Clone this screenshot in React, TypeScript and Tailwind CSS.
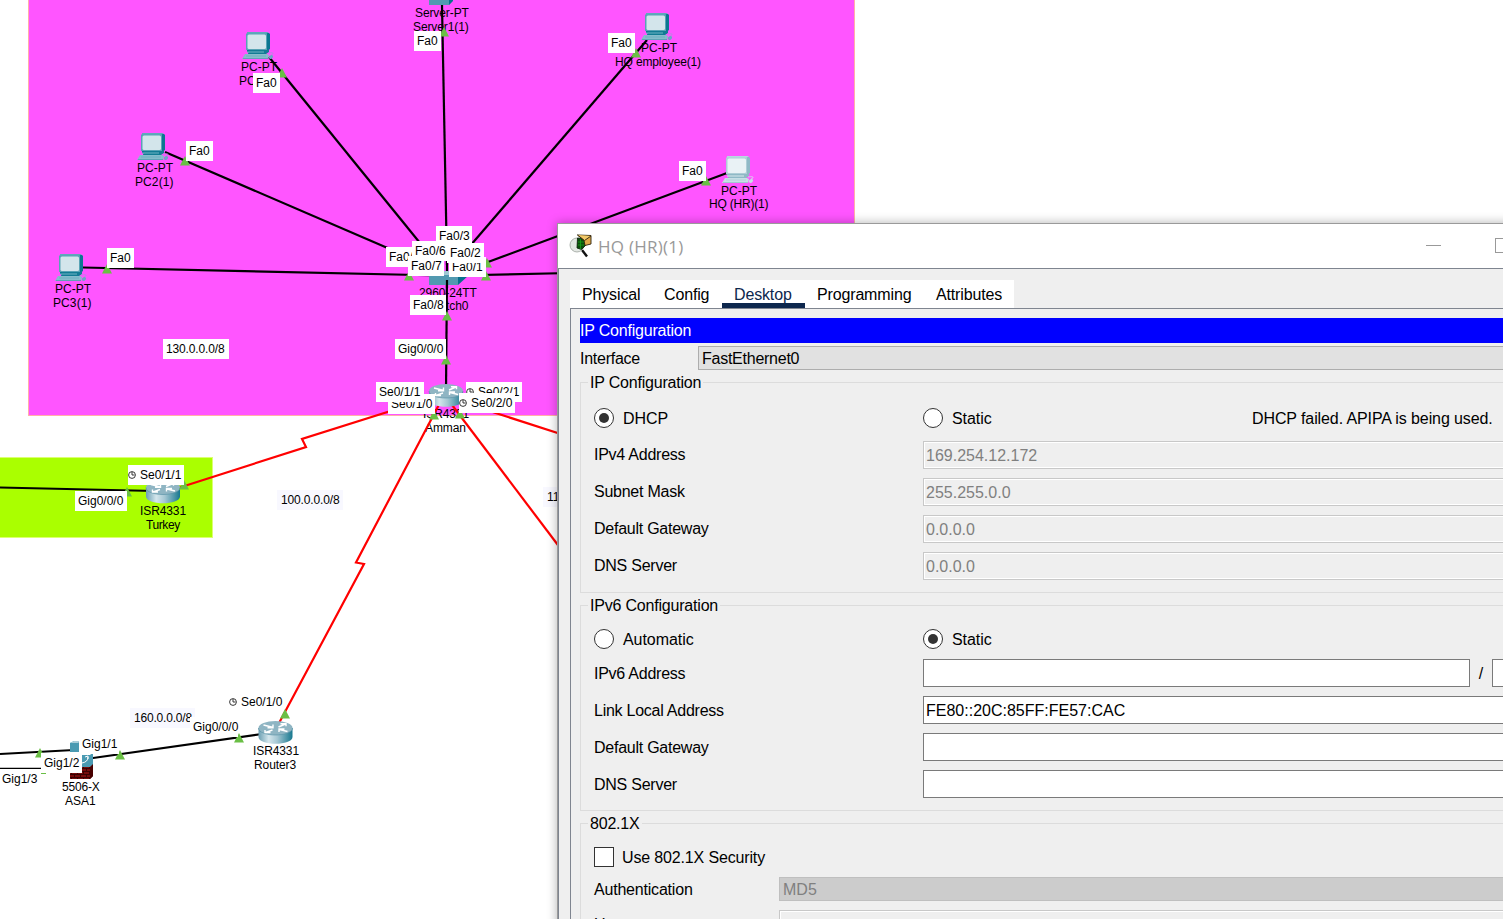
import React from "react";

type Pt = [number, number];

const cables: { pts: Pt[]; red?: boolean; width?: number }[] = [
  { pts: [[269, 57], [420, 243]] },
  { pts: [[442, 5], [447, 265]] },
  { pts: [[647, 40], [470, 246]] },
  { pts: [[727, 173], [480, 265]] },
  { pts: [[165, 152], [420, 262]] },
  { pts: [[83, 267.5], [440, 275.5]] },
  { pts: [[455, 275.5], [570, 273]] },
  { pts: [[447, 275], [446, 390]] },
  { pts: [[0, 487.5], [155, 491]] },
  { pts: [[0, 754], [74, 750]] },
  { pts: [[0, 768.5], [44, 768.5]], width: 1.4 },
  { pts: [[86, 759], [262, 734]] },
  { pts: [[435, 397], [302, 439], [306, 447], [175, 489]], red: true },
  { pts: [[443, 397], [356, 562.5], [364, 564], [278, 725]], red: true },
  { pts: [[446, 397], [570, 561]], red: true },
  { pts: [[446, 397], [570, 437]], red: true },
];

const links: Pt[] = [
  [282, 73], [444, 32], [636, 53], [706, 181], [185, 161], [107, 269],
  [409, 276], [486, 276], [487, 263], [447, 316], [446, 360], [434, 415], [460, 414],
  [127, 492], [184, 485], [285, 714], [239, 738], [120, 755], [40, 753],
];

const names: { x: number; y: number; t: string; s?: number }[] = [
  { x: 241, y: 67, t: "PC-PT" },
  { x: 239, y: 81, t: "PC1(1)" },
  { x: 415, y: 13, t: "Server-PT", s: -0.1 },
  { x: 413, y: 27, t: "Server1(1)", s: -0.1 },
  { x: 641, y: 48, t: "PC-PT" },
  { x: 615, y: 62, t: "HQ employee(1)", s: -0.15 },
  { x: 721, y: 191, t: "PC-PT" },
  { x: 709, y: 204, t: "HQ (HR)(1)", s: -0.2 },
  { x: 137, y: 168, t: "PC-PT" },
  { x: 135, y: 182, t: "PC2(1)", s: 0.1 },
  { x: 55, y: 289, t: "PC-PT" },
  { x: 53, y: 303, t: "PC3(1)", s: 0.1 },
  { x: 419, y: 293, t: "2960-24TT", s: -0.1 },
  { x: 427, y: 306, t: "Switch0", s: -0.1 },
  { x: 423, y: 414, t: "ISR4331", s: -0.1 },
  { x: 425, y: 428, t: "Amman", s: -0.1 },
  { x: 140, y: 511, t: "ISR4331", s: -0.1 },
  { x: 146, y: 525, t: "Turkey", s: -0.4 },
  { x: 253, y: 751, t: "ISR4331", s: -0.1 },
  { x: 254, y: 765, t: "Router3", s: -0.1 },
  { x: 62, y: 787, t: "5506-X", s: -0.2 },
  { x: 65, y: 801, t: "ASA1" },
];

const tags: { x: number; y: number; w: number; t: string; clock?: boolean; tint?: boolean; s?: number }[] = [
  { x: 253, y: 73, w: 27, t: "Fa0" },
  { x: 414, y: 31, w: 27, t: "Fa0" },
  { x: 608, y: 33, w: 27, t: "Fa0" },
  { x: 679, y: 161, w: 27, t: "Fa0" },
  { x: 186, y: 141, w: 27, t: "Fa0" },
  { x: 107, y: 248, w: 27, t: "Fa0" },
  { x: 436, y: 226, w: 36, t: "Fa0/3" },
  { x: 449, y: 257, w: 37, t: "Fa0/1" },
  { x: 386, y: 247, w: 36, t: "Fa0/5" },
  { x: 412, y: 241, w: 36, t: "Fa0/6" },
  { x: 447, y: 243, w: 37, t: "Fa0/2" },
  { x: 408, y: 256, w: 36, t: "Fa0/7" },
  { x: 410, y: 295, w: 36, t: "Fa0/8" },
  { x: 395, y: 339, w: 51, t: "Gig0/0/0" },
  { x: 388, y: 394, w: 47, t: "Se0/1/0" },
  { x: 376, y: 382, w: 48, t: "Se0/1/1" },
  { x: 466, y: 382, w: 56, t: "Se0/2/1", clock: true },
  { x: 459, y: 393, w: 56, t: "Se0/2/0", clock: true },
  { x: 128, y: 465, w: 56, t: "Se0/1/1", clock: true },
  { x: 75, y: 491, w: 52, t: "Gig0/0/0" },
  { x: 163, y: 339, w: 66, t: "130.0.0.0/8", s: -0.15 },
  { x: 277, y: 490, w: 66, t: "100.0.0.0/8", tint: true, s: -0.15 },
  { x: 543, y: 487, w: 66, t: "110.0.0.0/8", tint: true, s: -0.1 },
  { x: 130, y: 708, w: 65, t: "160.0.0.0/8", tint: true, s: -0.2 },
  { x: 190, y: 717, w: 48, t: "Gig0/0/0" },
  { x: 229, y: 692, w: 54, t: "Se0/1/0", clock: true },
  { x: 79, y: 734, w: 40, t: "Gig1/1" },
  { x: 41, y: 753, w: 41, t: "Gig1/2" },
  { x: -1, y: 769, w: 42, t: "Gig1/3" },
];

function Pc({ x, y, pale }: { x: number; y: number; pale?: boolean }) {
  return (
    <g transform={`translate(${x} ${y})`}>
      <path d="M5 1h22l1 1v15l-4 3H5z" fill={pale ? "#8fb9c6" : "#0b7691"} />
      <path d="M5 0h22l-3 2H5z" fill={pale ? "#b9d8e0" : "#5fa9bb"} />
      <rect x="4" y="1.500" width="21" height="16.500" fill={pale ? "#aecdd6" : "#58a3b5"} />
      <rect x="5.500" y="2.500" width="18.500" height="14.500" rx="1.500" fill={pale ? "#e9f2f5" : "#d3e5eb"} />
      <path d="M7 18h18l2-1v3l-3 2H6z" fill={pale ? "#8fb9c6" : "#127b94"} />
      <path d="M5 19.500h17v1H5z" fill={pale ? "#d6e8ed" : "#6fb4c4"} />
      <path d="M3 22h22l2 1-1 4H0z" fill={pale ? "#c7dfe6" : "#86bccb"} />
      <path d="M4 24h20" stroke={pale ? "#b5d2da" : "#6fb0c1"} />
      <path d="M1 26.500h25" stroke={pale ? "#a3c8d2" : "#5fa3b6"} />
      <path d="M26 21q6-1 5 1l-2 1" fill="none" stroke={pale ? "#d6e8ed" : "#b08be0"} strokeWidth=".7" />
      <ellipse cx="29" cy="25" rx="2.300" ry="1.700" fill={pale ? "#c7dfe6" : "#6ea5c5"} transform="rotate(-35 29 25)" />
    </g>
  );
}

function Router({ x, y }: { x: number; y: number }) {
  return (
    <g transform={`translate(${x} ${y})`}>
      <path d="M0 7v9c0 9 34 9 34 0V7z" fill="url(#routerBody)" />
      <ellipse cx="17" cy="7" rx="17" ry="7" fill="#8fb5c3" />
      <path d="M0 7c0 9.300 34 9.300 34 0" fill="none" stroke="#5b93a7" strokeWidth=".7" />
      <g stroke="#fff" strokeWidth="1.400" fill="none">
        <path d="M5 4l9 2.300M14.500 3.400v3.300H9M29 10.500l-8-2M20.500 11V8h5.500" />
        <path d="M20 6l7-3M22 2.800h5.500v2.500M14 9l-7 2.300M12 11.500H6.500V9" />
      </g>
    </g>
  );
}

function Topology() {
  return (
    <>
      <svg className="absolute inset-0" width="1503" height="919">
        <defs>
          <linearGradient id="routerBody">
            <stop offset="0" stopColor="#6b9fb2" />
            <stop offset=".3" stopColor="#d4e6ec" />
            <stop offset=".55" stopColor="#a5c7d3" />
            <stop offset="1" stopColor="#17788f" />
          </linearGradient>
          <pattern id="brick" width="6" height="6" patternUnits="userSpaceOnUse">
            <rect width="6" height="6" fill="#760b0b" />
            <path d="M0 .5h6M0 3.500h6M2.500 0v3M5.500 3v3" stroke="#330000" strokeWidth=".9" />
          </pattern>
        </defs>
        {cables.map((c, i) => (
          <polyline
            key={i}
            points={c.pts.map((p) => p.join(",")).join(" ")}
            fill="none"
            stroke={c.red ? "#ff0000" : "#000"}
            strokeWidth={c.width ?? 2.2}
          />
        ))}
        <Pc x={242} y={32} />
        <Pc x={641} y={13} />
        <Pc x={722} y={156} pale />
        <Pc x={137} y={133} />
        <Pc x={55} y={254} />
        <path d="M429 0h24l-4 5h-20z" fill="#5299b0" />
        <path d="M453 0v1l-4 4V0z" fill="#08708d" />
        <path d="M429 271h40l-12 5h-28z" fill="#9fc7d3" />
        <rect x="429" y="275" width="29" height="10" fill="#5299b0" />
        <path d="M458 275l10-4v5l-10 9z" fill="#08708d" />
        <path d="M447 262v9M447 280v8" stroke="#000" strokeWidth="2.200" />
        <Router x={429} y={384} />
        <Router x={146} y={480.5} />
        <Router x={258.5} y={721} />
        <path d="M70 743l4-2h7v11H70z" fill="#4a9ab2" />
        <path d="M70 743l4-2h7l-3 2z" fill="#a9cdd9" />
        <path d="M82 755h8l3-3v13l-3 2h-8z" fill="#4a9ab2" />
        <path d="M82 763q6-1 6-6M85 757l3-1v3" fill="none" stroke="#fff" />
        <path d="M70 773h12v-6h8l3-2v11l-3 3H70z" fill="url(#brick)" />
        <path d="M90 767l3-3v12l-3 3z" fill="#480000" />
        {links.map(([x, y], i) => (
          <path key={i} d={`M${x - 5} ${y + 4.5}L${x} ${y - 5}L${x + 5} ${y + 4.5}z`} fill="#6abf45" />
        ))}
        <path d="M41 773.500h5" stroke="#6abf45" />
      </svg>
      {tags.map((g, i) => (
        <div
          key={i}
          className={`absolute flex h-[20px] items-center whitespace-nowrap ${g.clock ? "pl-0" : g.tint ? "pl-[4px]" : "pl-[3px]"} ${g.tint ? "bg-[#f8f8ff]" : "bg-white"}`}
          style={{ left: g.x, top: g.y, width: g.w, letterSpacing: g.s ?? 0 }}
        >
          {g.clock && (
            <svg className="mr-[4px] shrink-0" width="8" height="8" viewBox="0 0 8 8" fill="none" stroke="#222" strokeWidth=".9">
              <circle cx="4" cy="4" r="3.400" />
              <path d="M4 1v3h2.500" />
            </svg>
          )}
          <span>{g.t}</span>
        </div>
      ))}
    </>
  );
}

function Radio({ on, label }: { on?: boolean; label: string }) {
  return (
    <label className="flex items-center gap-[9px]">
      <span className="flex size-5 items-center justify-center rounded-full border border-[#333] bg-white">
        {on && <span className="size-2.5 rounded-full bg-[#333]" />}
      </span>
      <span className="pt-[2px] tracking-[-0.05px]">{label}</span>
    </label>
  );
}

function Choice({ first, second, firstOn, note }: { first: string; second: string; firstOn?: boolean; note?: string }) {
  return (
    <div className="flex h-5 items-center pl-[13px]">
      <div className="w-[329px] shrink-0"><Radio on={firstOn} label={first} /></div>
      <div className="w-[329px] shrink-0"><Radio on={!firstOn} label={second} /></div>
      {note && <span className="pt-[2px] tracking-[-0.1px] whitespace-nowrap">{note}</span>}
    </div>
  );
}

function Field({ label, value = "", disabled, prefix }: { label: string; value?: string; disabled?: boolean; prefix?: boolean }) {
  const box = disabled
    ? "border border-[#c8c8c8] shadow-[inset_0_0_0_1px_#fff] bg-[#efefef] text-[#808080]"
    : "border border-[#7a7a7a] bg-white text-black";
  return (
    <div className="flex h-[28px] items-center pl-[13px]">
      <span className={`w-[329px] shrink-0 tracking-[-0.25px] ${disabled ? "" : "pt-px"}`}>{label}</span>
      <div className={`flex h-[28px] shrink-0 items-center pt-px pl-[2px] ${box} ${prefix ? "w-[547px]" : "w-[640px]"}`}>{value}</div>
      {prefix && <span className="w-[22px] shrink-0 pt-px text-center">/</span>}
      {prefix && <div className="h-[28px] w-20 shrink-0 border border-[#7a7a7a] bg-white" />}
    </div>
  );
}

function Group({ title, className, children }: { title: string; className: string; children: React.ReactNode }) {
  return (
    <section className={`w-[1000px] border border-[#dcdcdc] ${className}`}>
      <h2 className="-mt-[11px] ml-[7px] h-5 w-fit bg-[#efefef] px-[2px] leading-[21px] tracking-[-0.2px]">{title}</h2>
      {children}
    </section>
  );
}

function AppIcon() {
  return (
    <svg width="25" height="25" viewBox="0 0 25 25">
      <path d="M13 16l5 6.500" stroke="#111" strokeWidth="2.400" />
      <circle cx="8" cy="11" r="7" fill="#e3e7e3" stroke="#9aa19a" strokeWidth=".8" />
      <path d="M8.500 4l8.500 1v6l-4.500 4.500-4.500-1.500z" fill="#0b4d0b" stroke="#061d06" strokeWidth=".8" />
      <path d="M9 8h6M9 11h6M11.500 5v10" stroke="#18a018" strokeWidth=".8" />
      <path d="M8.500 1l13.500.5v8.500l-6 1.500-1-5z" fill="#dfa949" stroke="#2c210b" strokeWidth=".9" />
      <path d="M8.500 1l7 5.500L22 2" fill="#f2c968" stroke="#2c210b" strokeWidth=".9" />
    </svg>
  );
}

function ConfigWindow() {
  return (
    <div className="absolute top-[223px] left-[557px] h-[710px] w-[1010px] overflow-hidden border border-[#9a9a9a] bg-[#efefef] text-[16px] shadow-[0_0_10px_rgba(0,0,0,0.3)]">
      <header className="flex h-[45px] items-center border-b border-[#7f8590] bg-white pl-[11px]">
        <AppIcon />
        <span className="ml-1 w-[828px] shrink-0 pt-px font-['Open_Sans',sans-serif] text-[17px] tracking-[0.25px] text-[#999]">HQ (HR)(1)</span>
        <span className="-mt-px h-px w-[15px] shrink-0 bg-[#999]" />
        <span className="-mt-px ml-[54px] size-[15px] shrink-0 border border-[#999]" />
      </header>
      <div className="border-l border-[#7f8590] pt-[11px] pl-[11px]">
        <nav className="flex h-7 w-[444px] bg-white leading-[29px] tracking-[-0.15px] whitespace-nowrap">
          <span className="w-[82px] pl-3">Physical</span>
          <span className="w-[70px] pl-3">Config</span>
          <span className="h-7 w-[83px] border-b-5 border-[#0d274d] pl-3 text-[#0d274d]">Desktop</span>
          <span className="w-[118px] pl-3">Programming</span>
          <span className="pl-[13px]">Attributes</span>
        </nav>
        <main className="h-[640px] border-t border-l border-[#7f8590] pt-[9px] pl-[9px]">
          <h1 className="h-[25px] w-[1000px] bg-[#0000ff] leading-[25px] tracking-[-0.2px] text-white">IP Configuration</h1>
          <div className="mt-[3px] flex h-[24px] items-center tracking-[-0.25px]">
            <span className="w-[118px] shrink-0 pt-px">Interface</span>
            <div className="flex h-[24px] w-[880px] shrink-0 items-center border border-[#adadad] bg-[#e1e1e1] pt-px pl-[3px]">FastEthernet0</div>
          </div>
          <Group title="IP Configuration" className="mt-[12px] h-[211px]">
            <div className="pt-[16px]"><Choice first="DHCP" second="Static" firstOn note="DHCP failed. APIPA is being used." /></div>
            <div className="mt-[13px] flex flex-col gap-[9px]">
              <Field label="IPv4 Address" value="169.254.12.172" disabled />
              <Field label="Subnet Mask" value="255.255.0.0" disabled />
              <Field label="Default Gateway" value="0.0.0.0" disabled />
              <Field label="DNS Server" value="0.0.0.0" disabled />
            </div>
          </Group>
          <Group title="IPv6 Configuration" className="mt-[12px] h-[206px]">
            <div className="pt-[14px]"><Choice first="Automatic" second="Static" /></div>
            <div className="mt-[10px] flex flex-col gap-[9px]">
              <Field label="IPv6 Address" prefix />
              <Field label="Link Local Address" value="FE80::20C:85FF:FE57:CAC" />
              <Field label="Default Gateway" />
              <Field label="DNS Server" />
            </div>
          </Group>
          <Group title="802.1X" className="mt-[12px] h-[206px]">
            <label className="mt-[14px] flex h-5 items-center gap-[8px] pl-[13px] tracking-[-0.15px]">
              <span className="size-5 border border-[#333] bg-white" />
              <span className="pt-px">Use 802.1X Security</span>
            </label>
            <div className="mt-[10px] flex h-6 items-center pl-[13px]">
              <span className="w-[185px] shrink-0 pt-px tracking-[-0.2px]">Authentication</span>
              <div className="flex h-6 w-[780px] shrink-0 items-center border border-[#bfbfbf] bg-[#ccc] pt-px pl-[3px] text-[#808080]">MD5</div>
            </div>
            <div className="mt-[9px] flex h-7 items-center pl-[13px]">
              <span className="w-[185px] shrink-0 pt-px">Username</span>
              <div className="h-7 w-[780px] shrink-0 border border-[#c8c8c8] shadow-[inset_0_0_0_1px_#fff]" />
            </div>
          </Group>
        </main>
      </div>
    </div>
  );
}

export default function App() {
  return (
    <div className="relative h-[919px] w-[1503px] overflow-hidden bg-white font-['Liberation_Sans',Arial,sans-serif] text-[12px] leading-[14px] text-black">
      <div className="absolute top-[-2px] left-[28px] h-[418px] w-[827px] border border-[#ffb0a8] bg-[#ff55ff]" />
      <div className="absolute top-[457px] left-[-2px] h-[81px] w-[215px] border border-[#dcff70] bg-[#aaff00]" />
      {names.map((n, i) => (
        <span key={i} className="absolute whitespace-nowrap" style={{ left: n.x, top: n.y - 7, letterSpacing: n.s ?? 0 }}>
          {n.t}
        </span>
      ))}
      <Topology />
      <ConfigWindow />
    </div>
  );
}
